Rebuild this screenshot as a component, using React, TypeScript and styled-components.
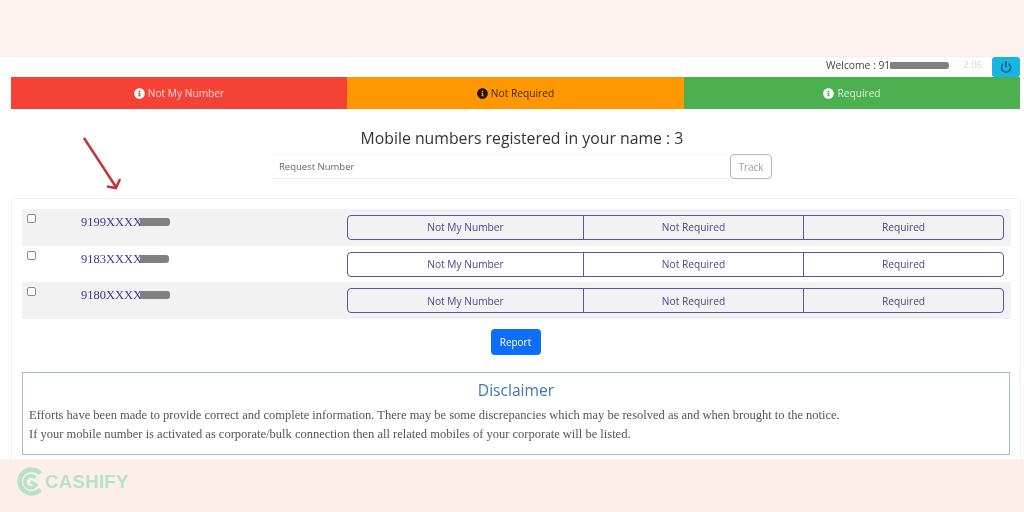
import React from "react";
import styled, { createGlobalStyle } from "styled-components";
import { FaInfoCircle } from "react-icons/fa";
import { Power } from "lucide-react";

const GlobalStyle = createGlobalStyle`
    html, body {
        margin: 0;
        padding: 0;
        background: #fdf1ea;
    }

    body {
        width: 1024px;
        height: 512px;
        overflow: hidden;
        font-family: "Open Sans", "Liberation Sans", sans-serif;
    }
`;

const Page = styled.div`
    width: 1024px;
    height: 512px;
    display: flex;
    flex-direction: column;
    background: #fdf1ea;
    position: relative;
    overflow: hidden;
    filter: blur(0.35px);
`;

const TopBand = styled.div`
    height: 57px;
    flex: none;
    background: #fdf2ec;
    border-bottom: 1px solid #f3efec;
    box-sizing: border-box;
`;

const Sheet = styled.main`
    height: 402px;
    flex: none;
    background: #fff;
    box-sizing: border-box;
    padding: 0 3px 0 11px;
    display: flex;
    flex-direction: column;
`;

const UserBar = styled.div`
    height: 20px;
    flex: none;
    display: flex;
    justify-content: flex-end;
    align-items: flex-start;
    padding-right: 1px;
    font-size: 10.3px;
    line-height: 16px;
    color: #444;
`;

const Welcome = styled.span`
    display: flex;
    align-items: center;
`;

const Redacted = styled.span<{ $w: number; $h?: number; $overlap?: number }>`
    display: inline-block;
    width: ${({ $w }) => $w}px;
    height: ${({ $h }) => $h ?? 7}px;
    margin-left: ${({ $overlap }) => -($overlap ?? 0)}px;
    background: #808080;
    border-radius: 1px 3px 3px 1px;
`;

const Timer = styled.span`
    color: #d6d6d6;
    font-size: 9.5px;
    margin: 0 10px 0 14px;
`;

const PowerButton = styled.button`
    width: 28px;
    height: 20px;
    padding: 0;
    border: 0;
    border-radius: 3px;
    background: #16b5e2;
    color: #065a8a;
    display: flex;
    align-items: center;
    justify-content: center;
`;

const StatusTabs = styled.div`
    height: 32px;
    display: grid;
    grid-template-columns: 336px 337px 336px;
    flex: none;
`;

const StatusTab = styled.div<{ $bg: string; $fg: string; $icon: string }>`
    background: ${({ $bg }) => $bg};
    color: ${({ $fg }) => $fg};
    font-size: 10.2px;
    display: flex;
    align-items: center;
    justify-content: center;
    gap: 3px;

    svg {
        color: ${({ $icon }) => $icon};
        width: 11px;
        height: 11px;
    }
`;

const Heading = styled.h2`
    margin: 18px 0 0;
    padding-left: 12px;
    text-align: center;
    font-size: 15.8px;
    line-height: 22px;
    font-weight: 400;
    color: #333;
`;

const TrackRow = styled.div`
    margin: 5px 0 0 261px;
    display: flex;
    height: 25px;
    flex: none;
`;

const RequestInput = styled.div`
    width: 458px;
    box-sizing: border-box;
    padding: 0 7px;
    display: flex;
    align-items: center;
    font-size: 9.5px;
    color: #666;
    border-top: 1px solid #f7f7f7;
    border-bottom: 1px solid #ececec;
`;

const TrackButton = styled.button`
    width: 42px;
    padding: 0;
    background: #fff;
    border: 1px solid #b5b5b5;
    border-radius: 4px;
    font: inherit;
    font-size: 10px;
    color: #9a9a9a;
`;

const ListCard = styled.section`
    margin-top: 19px;
    flex: 1;
    padding: 10px 9px 0 10px;
    border: solid #f0f0f0;
    border-width: 1px 1px 0 1px;
    display: flex;
    flex-direction: column;
    min-height: 0;
`;

const NumberRow = styled.div<{ $shaded: boolean }>`
    height: 36.7px;
    flex: none;
    box-sizing: border-box;
    background: ${({ $shaded }) => ($shaded ? "#f2f2f2" : "#fff")};
    display: flex;
    align-items: center;
    padding: 0 7px 0 5px;
    position: relative;
`;

const Tick = styled.span`
    width: 9px;
    height: 9px;
    flex: none;
    box-sizing: border-box;
    border: 1px solid #8a8a8a;
    border-radius: 2px;
    background: #fff;
    align-self: flex-start;
    margin-top: 5px;
`;

const MobileNumber = styled.span`
    width: 311px;
    flex: none;
    box-sizing: border-box;
    padding-left: 45px;
    align-self: flex-start;
    margin-top: 4px;
    display: flex;
    align-items: center;
    font-family: "Liberation Serif", serif;
    font-size: 12.5px;
    line-height: 18px;
    color: #3c379c;
`;

const ChoiceGroup = styled.div`
    width: 657px;
    height: 25px;
    flex: none;
    box-sizing: border-box;
    display: grid;
    grid-template-columns: 235px 220px 1fr;
    border: 1px solid #5a55ab;
    border-radius: 4px;
`;

const Choice = styled.div`
    display: flex;
    align-items: center;
    justify-content: center;
    font-size: 10.2px;
    color: #4a4690;

    & + & {
        border-left: 1px solid #5a55ab;
    }
`;

const ReportRow = styled.div`
    display: flex;
    justify-content: center;
    margin-top: 10px;
    padding-right: 2px;
`;

const ReportButton = styled.button`
    width: 50px;
    height: 26px;
    padding: 0;
    border: 0;
    border-radius: 4px;
    background: #0d6efd;
    color: #fff;
    font: inherit;
    font-size: 10px;
`;

const Disclaimer = styled.div`
    margin: 17px 1px 0 0;
    height: 83px;
    box-sizing: border-box;
    border: 1px solid #9dbfdc;
    padding: 7px 6px 0;
`;

const DisclaimerTitle = styled.h3`
    margin: 0;
    text-align: center;
    font-size: 15.6px;
    line-height: 21px;
    font-weight: 400;
    color: #3f78b4;
`;

const DisclaimerText = styled.p`
    margin: 5px 0 0;
    font-family: "Liberation Serif", serif;
    font-size: 12.5px;
    line-height: 19px;
    color: #555;
    white-space: nowrap;
`;

const Footer = styled.footer`
    flex: 1;
    padding: 8px 0 0 17px;
    background: #fcefe7;
`;

const Logo = styled.div`
    display: flex;
    align-items: center;
    color: #b5e2c9;
`;

const LogoText = styled.span`
    font-family: "Liberation Sans", sans-serif;
    font-weight: 700;
    font-size: 18.6px;
    letter-spacing: 0.3px;
    line-height: 28px;
    margin-left: -1px;
`;

const ArrowMark = styled.svg`
    position: absolute;
    left: 78px;
    top: 132px;
`;

const tabs = [
    { label: "Not My Number", bg: "#f44336", fg: "#ffd9d5", icon: "#fff" },
    { label: "Not Required", bg: "#ff9800", fg: "#4a2a00", icon: "#1c1200" },
    { label: "Required", bg: "#4caf50", fg: "#d9f5da", icon: "#fff" },
];

const numbers = [
    { prefix: "9199XXXX", w: 30 },
    { prefix: "9183XXXX", w: 29 },
    { prefix: "9180XXXX", w: 30 },
];

const App = () => {
    return (
        <Page>
            <GlobalStyle />
            <TopBand />
            <Sheet>
                <UserBar>
                    <Welcome>
                        Welcome : 91
                        <Redacted $w={59} />
                    </Welcome>
                    <Timer>2:06</Timer>
                    <PowerButton aria-label="Log out">
                        <Power size={12} strokeWidth={3} />
                    </PowerButton>
                </UserBar>
                <StatusTabs>
                    {tabs.map((tab) => (
                        <StatusTab
                            key={tab.label}
                            $bg={tab.bg}
                            $fg={tab.fg}
                            $icon={tab.icon}
                        >
                            <FaInfoCircle />
                            {tab.label}
                        </StatusTab>
                    ))}
                </StatusTabs>
                <Heading>Mobile numbers registered in your name : 3</Heading>
                <TrackRow>
                    <RequestInput>Request Number</RequestInput>
                    <TrackButton>Track</TrackButton>
                </TrackRow>
                <ListCard>
                    {numbers.map((item, i) => (
                        <NumberRow key={item.prefix} $shaded={i % 2 === 0}>
                            <Tick />
                            <MobileNumber>
                                {item.prefix}
                                <Redacted $w={item.w} $h={8} $overlap={2} />
                            </MobileNumber>
                            <ChoiceGroup>
                                <Choice>Not My Number</Choice>
                                <Choice>Not Required</Choice>
                                <Choice>Required</Choice>
                            </ChoiceGroup>
                        </NumberRow>
                    ))}
                    <ReportRow>
                        <ReportButton>Report</ReportButton>
                    </ReportRow>
                    <Disclaimer>
                        <DisclaimerTitle>Disclaimer</DisclaimerTitle>
                        <DisclaimerText>
                            Efforts have been made to provide correct and complete
                            information. There may be some discrepancies which may be
                            resolved as and when brought to the notice.
                            <br />
                            If your mobile number is activated as corporate/bulk
                            connection then all related mobiles of your corporate will
                            be listed.
                        </DisclaimerText>
                    </Disclaimer>
                </ListCard>
            </Sheet>
            <Footer>
                <Logo>
                    <svg width="29" height="29" viewBox="0 0 29 29" fill="none">
                        <path
                            d="M23.5 6.5A12 12 0 1 0 23.5 22.5"
                            stroke="#b5e2c9"
                            strokeWidth="4.5"
                        />
                        <path
                            d="M18.5 11A6 6 0 1 0 19 18L13.5 14.5"
                            stroke="#b5e2c9"
                            strokeWidth="3.5"
                        />
                    </svg>
                    <LogoText>CASHIFY</LogoText>
                </Logo>
            </Footer>
            <ArrowMark width="46" height="62" viewBox="0 0 46 62" fill="none">
                <path
                    d="M6 6L38 55M29 54.500L38 56L42 47"
                    stroke="#c8323a"
                    strokeWidth="2.5"
                />
            </ArrowMark>
        </Page>
    );
};

export default App;
